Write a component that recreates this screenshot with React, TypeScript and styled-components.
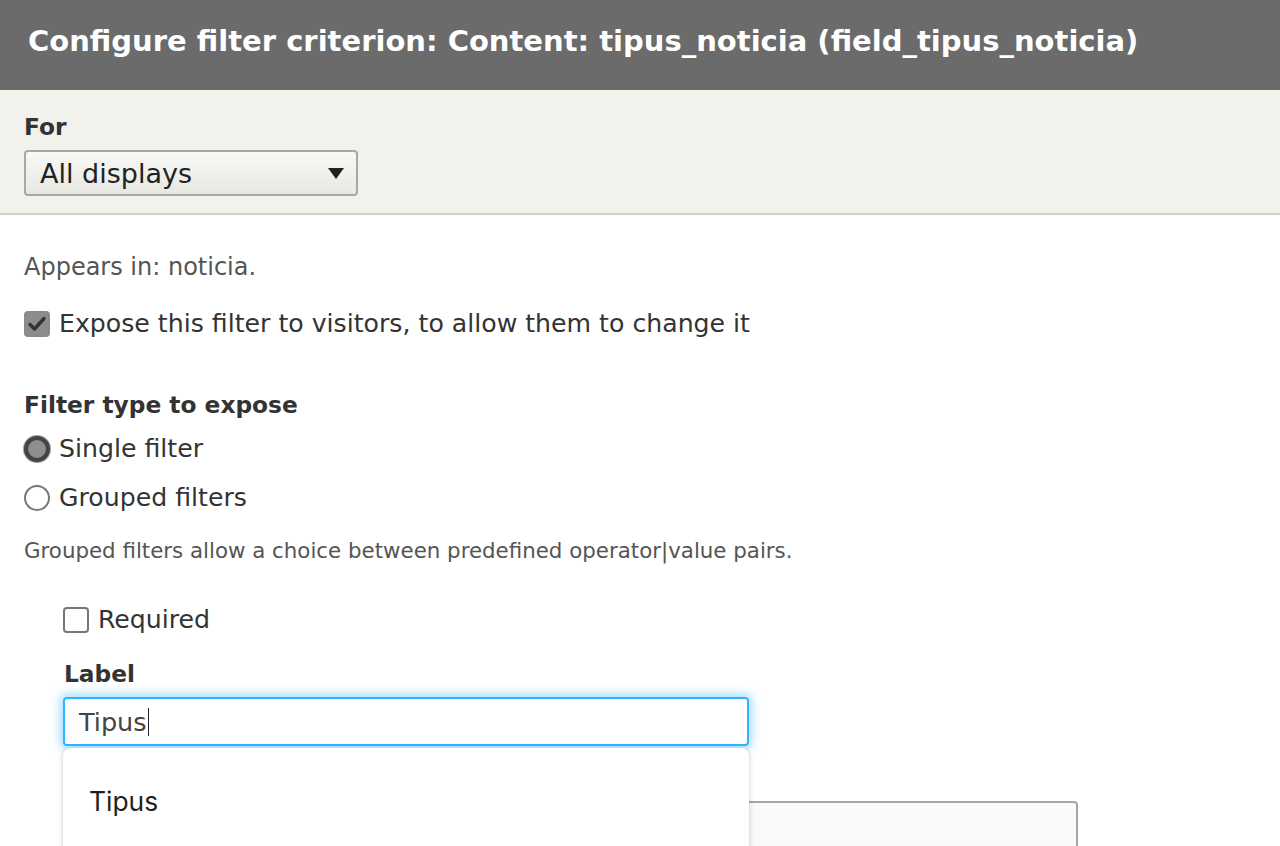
import React from "react";
import styled, { createGlobalStyle } from "styled-components";

const Global = createGlobalStyle`
  html, body { margin: 0; padding: 0; background: #fff; }
  body { font-family: "DejaVu Sans", "Liberation Sans", sans-serif; color: #333; overflow: hidden; }
`;

const Page = styled.div`
  width: 1280px;
  height: 846px;
  overflow: hidden;
  display: flex;
  flex-direction: column;
  & > * { flex-shrink: 0; }
`;

const TitleBar = styled.div`
  height: 90px;
  background: #6b6b6b;
  display: flex;
  align-items: center;
  padding: 0 0 9px 28px;
  box-sizing: border-box;
`;

const Title = styled.h1`
  margin: 0;
  color: #fff;
  font-size: 29px;
  font-weight: bold;
  line-height: 36px;
`;

const DisplayPanel = styled.div`
  background: #f2f2ed;
  border-bottom: 2px solid #d0d0cc;
  padding: 22px 24px 17px;
  display: flex;
  flex-direction: column;
  gap: 8px;
`;

const BoldLabel = styled.div`
  font-weight: bold;
  font-size: 23.3px;
  color: #333;
  line-height: 30px;
`;

const FieldLabel = styled(BoldLabel)`
  margin-left: 1px;
`;

const SelectBox = styled.div`
  width: 334px;
  height: 46px;
  box-sizing: border-box;
  border: 2px solid #a8a8a8;
  border-radius: 4px;
  background: linear-gradient(#f8f8f5, #e8e8e3);
  display: flex;
  align-items: center;
  justify-content: space-between;
  padding: 0 12px 0 14px;
  font-size: 27px;
  color: #222;
`;

const Caret = styled.span`
  width: 0;
  height: 0;
  border-left: 8px solid transparent;
  border-right: 8px solid transparent;
  border-top: 11px solid #222;
`;

const Body = styled.div`
  padding: 37px 24px 0;
  display: flex;
  flex-direction: column;
  & > * { flex-shrink: 0; }
`;

const Muted = styled.div`
  font-size: 24px;
  color: #555;
  line-height: 30px;
`;

const Description = styled.div`
  font-size: 21.35px;
  color: #555;
  line-height: 26px;
`;

const OptionRow = styled.div`
  display: flex;
  align-items: center;
  gap: 9px;
  font-size: 25.2px;
  color: #333;
  line-height: 30px;
`;

const CheckBox = styled.span<{ $checked?: boolean }>`
  width: 26px;
  height: 26px;
  box-sizing: border-box;
  border-radius: 4px;
  border: 2px solid ${(p) => (p.$checked ? "#8a8a8a" : "#777")};
  background: ${(p) => (p.$checked ? "#8c8c8c" : "#fff")};
  display: flex;
  align-items: center;
  justify-content: center;
  flex-shrink: 0;
`;

const Radio = styled.span<{ $checked?: boolean }>`
  width: 26px;
  height: 26px;
  box-sizing: border-box;
  border-radius: 50%;
  border: ${(p) => (p.$checked ? "4px solid #444" : "2px solid #777")};
  background: ${(p) => (p.$checked ? "#8e8e8e" : "#fff")};
  box-shadow: ${(p) => (p.$checked ? "0 0 0 1px #a0a0a0" : "none")};
  flex-shrink: 0;
`;

const Indented = styled.div`
  margin-left: 39px;
  display: flex;
  flex-direction: column;
  & > * { flex-shrink: 0; }
`;

const Combo = styled.div`
  position: relative;
  width: 686px;
  z-index: 2;
`;

const TextInput = styled.div`
  width: 686px;
  height: 49px;
  box-sizing: border-box;
  border: 2px solid #2fb5ff;
  border-radius: 4px;
  box-shadow: 0 0 10px 3px rgba(90, 195, 255, 0.55);
  background: #fff;
  display: flex;
  align-items: center;
  padding-left: 14px;
  font-size: 25.5px;
  color: #444;
`;

const CursorMark = styled.span`
  display: inline-block;
  width: 1px;
  height: 28px;
  background: #222;
  margin-left: 1px;
`;

const TextArea = styled.div`
  width: 1015px;
  height: 120px;
  box-sizing: border-box;
  border: 2px solid #a6a6a6;
  border-radius: 4px;
  background: #f9f9f7;
`;

const Suggestions = styled.div`
  position: absolute;
  left: 0;
  top: calc(100% + 2px);
  width: 686px;
  height: 200px;
  background: #fff;
  border-radius: 8px;
  box-shadow: 0 1px 5px rgba(0, 0, 0, 0.22);
  padding: 37px 0 0 26px;
  box-sizing: border-box;
  font-family: "Inter", "Liberation Sans", sans-serif;
  font-size: 26.4px;
  line-height: 32px;
  color: #1f1f1f;
`;

const Spacer = styled.div<{ $h: number }>`
  height: ${(p) => p.$h}px;
`;

export default function App() {
  return (
    <Page>
      <Global />
      <TitleBar>
        <Title>Configure filter criterion: Content: tipus_noticia (field_tipus_noticia)</Title>
      </TitleBar>
      <DisplayPanel>
        <BoldLabel>For</BoldLabel>
        <SelectBox>
          <span>All displays</span>
          <Caret />
        </SelectBox>
      </DisplayPanel>
      <Body>
        <Muted>Appears in: noticia.</Muted>
        <Spacer $h={27} />
        <OptionRow>
          <CheckBox $checked>
            <svg width="18" height="16" viewBox="0 0 18 16">
              <path d="M2 8.5 L6.5 13 L16 2.5" fill="none" stroke="#333" strokeWidth="3.4" strokeLinecap="round" strokeLinejoin="round" />
            </svg>
          </CheckBox>
          <span>Expose this filter to visitors, to allow them to change it</span>
        </OptionRow>
        <Spacer $h={51} />
        <BoldLabel>Filter type to expose</BoldLabel>
        <Spacer $h={14} />
        <OptionRow>
          <Radio $checked />
          <span>Single filter</span>
        </OptionRow>
        <Spacer $h={19} />
        <OptionRow>
          <Radio />
          <span>Grouped filters</span>
        </OptionRow>
        <Spacer $h={25} />
        <Description>Grouped filters allow a choice between predefined operator|value pairs.</Description>
        <Spacer $h={41} />
        <Indented>
          <OptionRow>
            <CheckBox />
            <span>Required</span>
          </OptionRow>
          <Spacer $h={24} />
          <FieldLabel>Label</FieldLabel>
          <Spacer $h={8} />
          <Combo>
            <TextInput>
              Tipus
              <CursorMark />
            </TextInput>
            <Suggestions>Tipus</Suggestions>
          </Combo>
          <Spacer $h={55} />
          <TextArea />
        </Indented>
      </Body>
    </Page>
  );
}
